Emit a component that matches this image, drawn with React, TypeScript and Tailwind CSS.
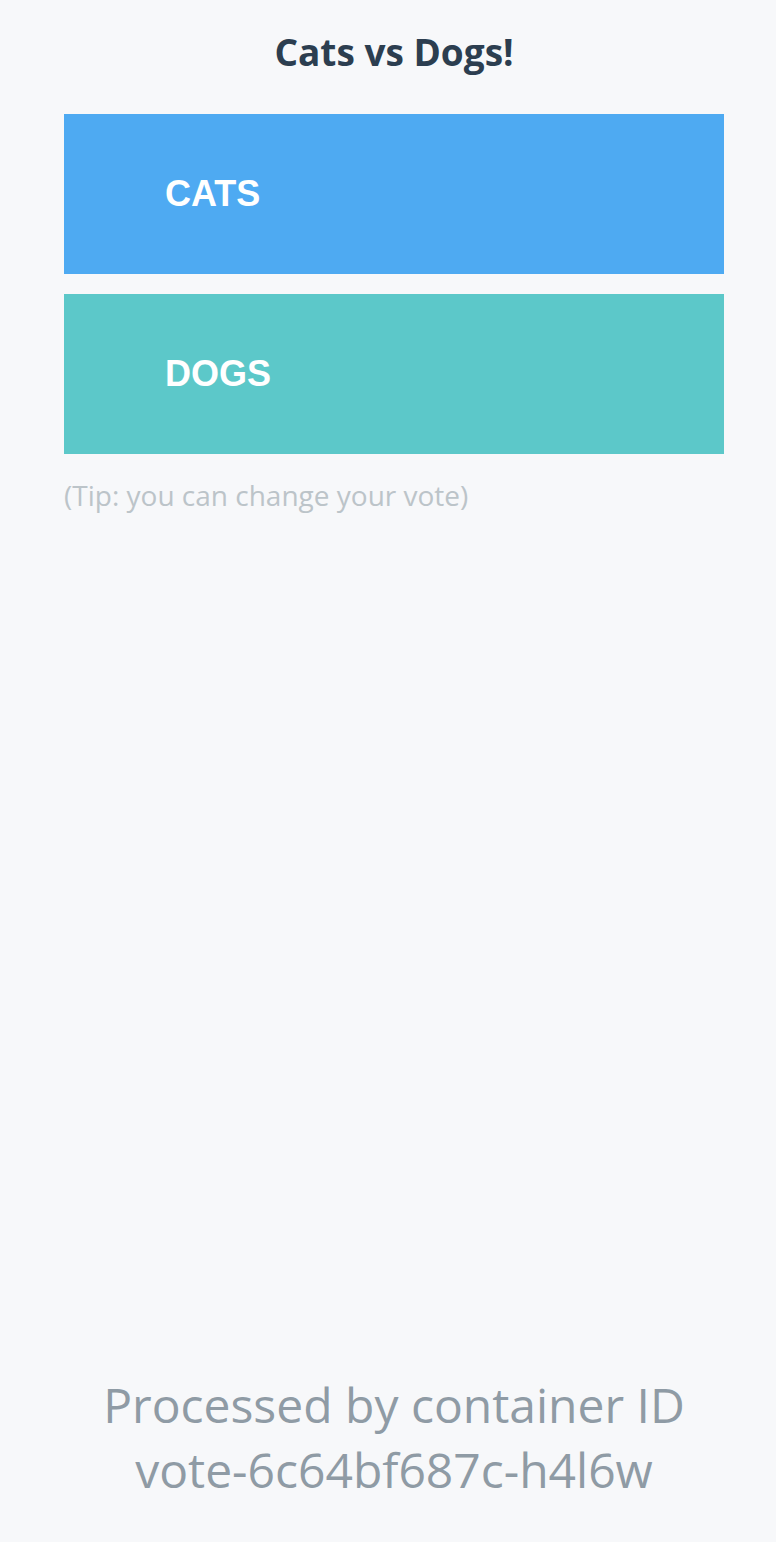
import React, { useState } from 'react';

export default function App() {
  const [vote, setVote] = useState<'a' | 'b' | null>(null);

  return (
    <div className="min-h-screen bg-[#f7f8fa] flex flex-col pl-16 pr-[52px] font-['Open_Sans','Noto_Sans',sans-serif]">
      <h1 className="text-center text-[37px] leading-[48px] font-bold text-[#2c3e50] pt-[28px] pb-[38px]">
        Cats vs Dogs!
      </h1>

      <div className="flex flex-col gap-5">
        <button
          onClick={() => setVote('a')}
          className={`h-[160px] w-full bg-[#4eaaf2] text-white text-left pl-[101px] font-['Liberation_Sans','Arial',sans-serif] font-bold text-[36px] cursor-pointer ${vote === 'a' ? 'opacity-100' : ''}`}
        >
          CATS
        </button>
        <button
          onClick={() => setVote('b')}
          className={`h-[160px] w-full bg-[#5cc8c9] text-white text-left pl-[101px] font-['Liberation_Sans','Arial',sans-serif] font-bold text-[36px] cursor-pointer ${vote === 'b' ? 'opacity-100' : ''}`}
        >
          DOGS
        </button>
      </div>

      <p className="mt-[21px] text-[28px] leading-[40px] text-[#bcc4c9]">(Tip: you can change your vote)</p>

      <div className="mt-auto pb-[40px] text-center text-[48px] leading-[65px] text-[#8f9ba5]">
        <div>Processed by container ID</div>
        <div>vote-6c64bf687c-h4l6w</div>
      </div>
    </div>
  );
}
